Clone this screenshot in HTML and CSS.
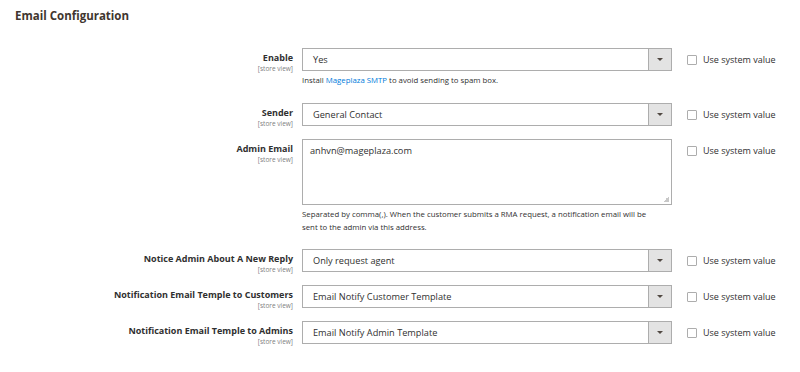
FILE: index.html
```html
<!DOCTYPE html>
<html>
<head>
<meta charset="utf-8">
<link rel="stylesheet" href="styles.css">
</head>
<body>
<div class="page">
  <h2 class="title">Email Configuration</h2>
  <div class="fields">
    <div class="row row-enable">
      <div class="label"><span class="name">Enable</span><span class="scope">[store view]</span></div>
      <div class="control">
        <div class="select"><span class="value">Yes</span><span class="arrow"></span></div>
        <div class="note">Install <a class="link">Mageplaza SMTP</a> to avoid sending to spam box.</div>
      </div>
      <div class="usedef"><span class="box"></span><span>Use system value</span></div>
    </div>
    <div class="row row-sender">
      <div class="label"><span class="name">Sender</span><span class="scope">[store view]</span></div>
      <div class="control">
        <div class="select"><span class="value">General Contact</span><span class="arrow"></span></div>
      </div>
      <div class="usedef"><span class="box"></span><span>Use system value</span></div>
    </div>
    <div class="row row-email">
      <div class="label"><span class="name">Admin Email</span><span class="scope">[store view]</span></div>
      <div class="control">
        <div class="textarea"><span class="value">anhvn@mageplaza.com</span><span class="grip"></span></div>
        <div class="note note-wrap">Separated by comma(,). When the customer submits a RMA request, a notification email will be sent to the admin via this address.</div>
      </div>
      <div class="usedef usedef-top"><span class="box"></span><span>Use system value</span></div>
    </div>
    <div class="row row-notice">
      <div class="label"><span class="name">Notice Admin About A New Reply</span><span class="scope">[store view]</span></div>
      <div class="control">
        <div class="select"><span class="value">Only request agent</span><span class="arrow"></span></div>
      </div>
      <div class="usedef"><span class="box"></span><span>Use system value</span></div>
    </div>
    <div class="row">
      <div class="label"><span class="name">Notification Email Temple to Customers</span><span class="scope">[store view]</span></div>
      <div class="control">
        <div class="select"><span class="value">Email Notify Customer Template</span><span class="arrow"></span></div>
      </div>
      <div class="usedef"><span class="box"></span><span>Use system value</span></div>
    </div>
    <div class="row">
      <div class="label"><span class="name">Notification Email Temple to Admins</span><span class="scope">[store view]</span></div>
      <div class="control">
        <div class="select"><span class="value">Email Notify Admin Template</span><span class="arrow"></span></div>
      </div>
      <div class="usedef"><span class="box"></span><span>Use system value</span></div>
    </div>
  </div>
</div>
</body>
</html>
```
FILE: styles.css
```css
html, body {
  margin: 0;
  padding: 0;
  background: #ffffff;
}
body {
  font-family: "Open Sans", "Noto Sans", sans-serif;
  color: #303030;
  width: 800px;
  height: 372px;
  overflow: hidden;
}
.page {
  padding: 8px 0 0 15px;
}
.title {
  margin: 0;
  font-size: 11.5px;
  font-weight: 700;
  color: #41362f;
  line-height: 16px;
}
.fields {
  display: flex;
  flex-direction: column;
  gap: 13px;
  padding-top: 24px;
}
.row {
  display: flex;
  align-items: flex-start;
}
.row-sender {
  margin-top: 3px;
}
.row-notice {
  margin-top: 2px;
}
.label {
  width: 278px;
  height: 23px;
  box-sizing: border-box;
  display: flex;
  flex-direction: column;
  align-items: flex-end;
  padding-top: 4px;
  text-align: right;
}
.name {
  font-size: 9px;
  font-weight: 700;
  line-height: 12px;
  color: #303030;
}
.scope {
  font-size: 6.5px;
  line-height: 9px;
  color: #808080;
}
.control {
  width: 370px;
  margin-left: 9px;
}
.select {
  height: 23px;
  box-sizing: border-box;
  border: 1px solid #adadad;
  display: flex;
  align-items: center;
  background: #fff;
}
.value {
  flex: 1;
  padding-left: 10px;
  font-size: 9.2px;
  color: #303030;
}
.arrow {
  width: 23px;
  height: 21px;
  box-sizing: border-box;
  border-left: 1px solid #adadad;
  background: #e3e3e3;
  display: flex;
  align-items: center;
  justify-content: center;
}
.arrow::after {
  content: "";
  width: 0;
  height: 0;
  border-left: 3px solid transparent;
  border-right: 3px solid transparent;
  border-top: 3px solid #514943;
}
.textarea {
  position: relative;
  height: 66px;
  box-sizing: border-box;
  border: 1px solid #adadad;
  padding-top: 4px;
}
.textarea .value {
  display: block;
  padding-left: 7px;
}
.grip {
  position: absolute;
  right: 2px;
  bottom: 2px;
  width: 6px;
  height: 6px;
  background: linear-gradient(135deg, transparent 50%, #c8c8c8 50%);
}
.note {
  font-size: 7.8px;
  line-height: 13px;
  color: #303030;
  margin-top: 3px;
}
.note-wrap {
  padding-right: 22px;
}
.link {
  color: #007bdb;
}
.usedef {
  display: flex;
  align-items: center;
  margin-left: 15px;
  height: 23px;
  font-size: 9px;
  color: #303030;
}
.box {
  width: 10px;
  height: 10px;
  box-sizing: border-box;
  border: 1px solid #adadad;
  border-radius: 1px;
  margin-right: 6px;
  background: #fff;
}
```
